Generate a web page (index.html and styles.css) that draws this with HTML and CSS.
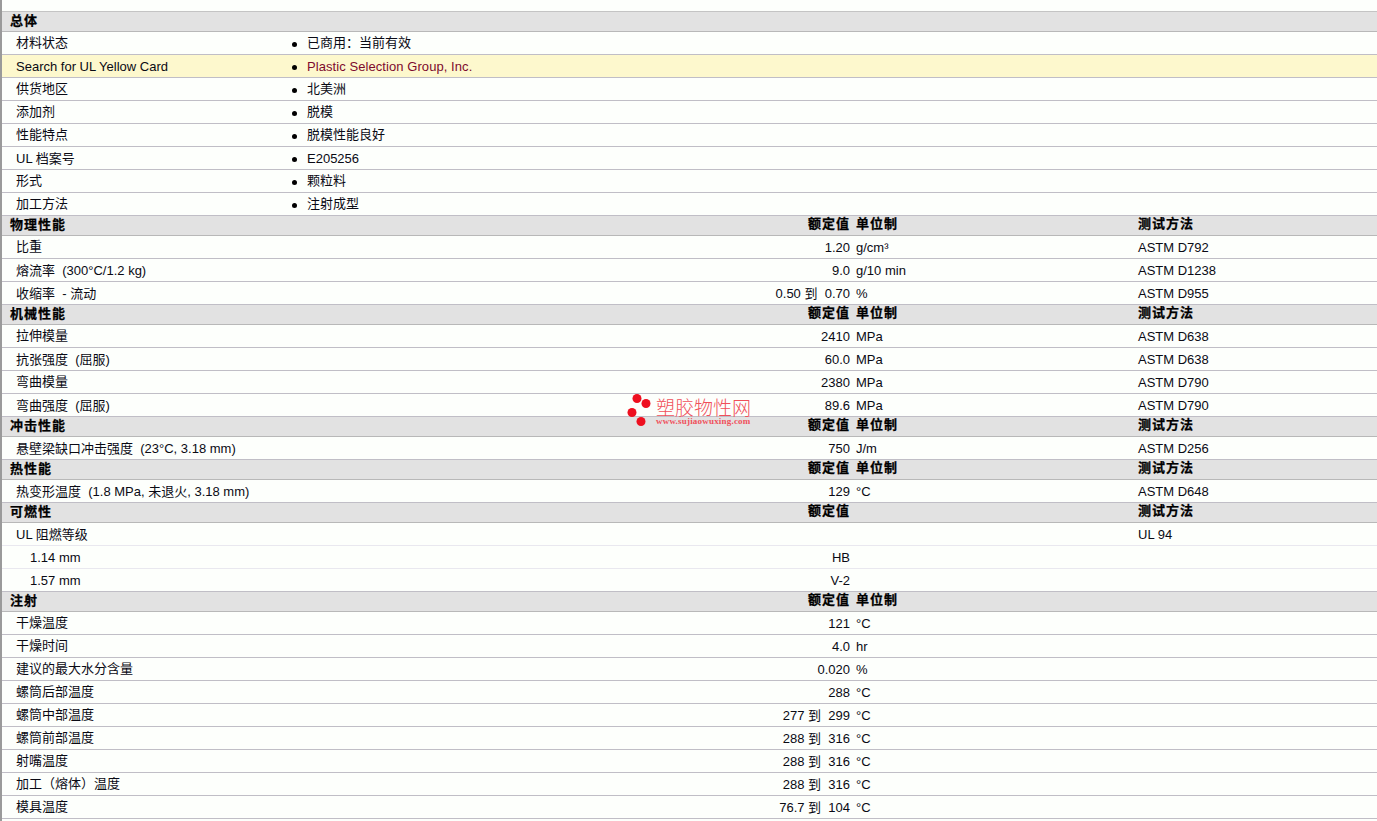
FILE: index.html
```html
<!DOCTYPE html>
<html lang="zh">
<head>
<meta charset="utf-8">
<title>塑胶物性</title>
<link rel="stylesheet" href="styles.css">
</head>
<body>
<main class="sheet">
  <div class="watermark">
    <svg class="wm-dots" width="28" height="36" viewBox="0 0 28 36"><circle cx="10" cy="5.5" r="4.5"/><circle cx="19" cy="10.5" r="4.5"/><circle cx="5" cy="19.5" r="4.5"/><circle cx="14" cy="28.5" r="4.5"/></svg>
    <div class="wm-text"><div class="wm-title">塑胶物性网</div><div class="wm-url">www.sujiaowuxing.com</div></div>
  </div>

  <div class="row head top"><span class="c-label">总体</span></div>
  <div class="row info"><span class="c-label zh">材料状态</span><span class="c-value zh">已商用：当前有效</span></div>
  <div class="row info hl"><span class="c-label">Search for UL Yellow Card</span><span class="c-value link">Plastic Selection Group, Inc.</span></div>
  <div class="row info"><span class="c-label zh">供货地区</span><span class="c-value zh">北美洲</span></div>
  <div class="row info"><span class="c-label zh">添加剂</span><span class="c-value zh">脱模</span></div>
  <div class="row info"><span class="c-label zh">性能特点</span><span class="c-value zh">脱模性能良好</span></div>
  <div class="row info"><span class="c-label">UL 档案号</span><span class="c-value">E205256</span></div>
  <div class="row info"><span class="c-label zh">形式</span><span class="c-value zh">颗粒料</span></div>
  <div class="row info"><span class="c-label zh">加工方法</span><span class="c-value zh">注射成型</span></div>

  <div class="row head data"><span class="c-label">物理性能</span><span class="c-num">额定值</span><span class="c-unit">单位制</span><span>测试方法</span></div>
  <div class="row data"><span class="c-label zh">比重</span><span class="c-num">1.20</span><span class="c-unit">g/cm³</span><span>ASTM D792</span></div>
  <div class="row data"><span class="c-label">熔流率&nbsp; (300°C/1.2 kg)</span><span class="c-num">9.0</span><span class="c-unit">g/10 min</span><span>ASTM D1238</span></div>
  <div class="row data"><span class="c-label">收缩率&nbsp; - 流动</span><span class="c-num">0.50 到&nbsp; 0.70</span><span class="c-unit">%</span><span>ASTM D955</span></div>

  <div class="row head data"><span class="c-label">机械性能</span><span class="c-num">额定值</span><span class="c-unit">单位制</span><span>测试方法</span></div>
  <div class="row data"><span class="c-label zh">拉伸模量</span><span class="c-num">2410</span><span class="c-unit">MPa</span><span>ASTM D638</span></div>
  <div class="row data"><span class="c-label">抗张强度&nbsp; (屈服)</span><span class="c-num">60.0</span><span class="c-unit">MPa</span><span>ASTM D638</span></div>
  <div class="row data"><span class="c-label zh">弯曲模量</span><span class="c-num">2380</span><span class="c-unit">MPa</span><span>ASTM D790</span></div>
  <div class="row data"><span class="c-label">弯曲强度&nbsp; (屈服)</span><span class="c-num">89.6</span><span class="c-unit">MPa</span><span>ASTM D790</span></div>

  <div class="row head data"><span class="c-label">冲击性能</span><span class="c-num">额定值</span><span class="c-unit">单位制</span><span>测试方法</span></div>
  <div class="row data"><span class="c-label">悬壁梁缺口冲击强度&nbsp; (23°C, 3.18 mm)</span><span class="c-num">750</span><span class="c-unit">J/m</span><span>ASTM D256</span></div>

  <div class="row head data"><span class="c-label">热性能</span><span class="c-num">额定值</span><span class="c-unit">单位制</span><span>测试方法</span></div>
  <div class="row data"><span class="c-label">热变形温度&nbsp; (1.8 MPa, 未退火, 3.18 mm)</span><span class="c-num">129</span><span class="c-unit">°C</span><span>ASTM D648</span></div>

  <div class="row head data"><span class="c-label">可燃性</span><span class="c-num">额定值</span><span class="c-unit"></span><span>测试方法</span></div>
  <div class="row data soft"><span class="c-label">UL 阻燃等级</span><span class="c-num"></span><span class="c-unit"></span><span>UL 94</span></div>
  <div class="row data soft"><span class="c-label sub">1.14 mm</span><span class="c-num">HB</span><span class="c-unit"></span><span></span></div>
  <div class="row data"><span class="c-label sub">1.57 mm</span><span class="c-num">V-2</span><span class="c-unit"></span><span></span></div>

  <div class="row head data"><span class="c-label">注射</span><span class="c-num">额定值</span><span class="c-unit">单位制</span><span></span></div>
  <div class="row data"><span class="c-label zh">干燥温度</span><span class="c-num">121</span><span class="c-unit">°C</span><span></span></div>
  <div class="row data"><span class="c-label zh">干燥时间</span><span class="c-num">4.0</span><span class="c-unit">hr</span><span></span></div>
  <div class="row data"><span class="c-label zh">建议的最大水分含量</span><span class="c-num">0.020</span><span class="c-unit">%</span><span></span></div>
  <div class="row data"><span class="c-label zh">螺筒后部温度</span><span class="c-num">288</span><span class="c-unit">°C</span><span></span></div>
  <div class="row data"><span class="c-label zh">螺筒中部温度</span><span class="c-num">277 到&nbsp; 299</span><span class="c-unit">°C</span><span></span></div>
  <div class="row data"><span class="c-label zh">螺筒前部温度</span><span class="c-num">288 到&nbsp; 316</span><span class="c-unit">°C</span><span></span></div>
  <div class="row data"><span class="c-label zh">射嘴温度</span><span class="c-num">288 到&nbsp; 316</span><span class="c-unit">°C</span><span></span></div>
  <div class="row data"><span class="c-label zh">加工（熔体）温度</span><span class="c-num">288 到&nbsp; 316</span><span class="c-unit">°C</span><span></span></div>
  <div class="row data"><span class="c-label zh">模具温度</span><span class="c-num">76.7 到&nbsp; 104</span><span class="c-unit">°C</span><span></span></div>
</main>
</body>
</html>
```
FILE: styles.css
```css
html, body {
  margin: 0;
  padding: 0;
  background: #fdfffc;
  height: 821px;
  overflow: hidden;
}
.sheet {
  position: relative;
  height: 810px;
  padding-top: 11px;
  border-left: 2px solid #9a9a9a;
  font: 13px/1 "Liberation Sans", "Noto Sans CJK SC", sans-serif;
  color: #0a0a14;
}
.row {
  display: flex;
  align-items: center;
  height: 22px;
  border-bottom: 1px solid #c0bec6;
  white-space: nowrap;
}
.row.data {
  display: grid;
  grid-template-columns: 500px 348px 288px 1fr;
  align-items: center;
}
.row.soft { border-bottom-color: #e9e8ef; }
.head {
  height: 19px;
  background: #e2e2e2;
  border-bottom: 1px solid #b8b8b8;
  font-weight: 700;
  letter-spacing: 1px;
  color: #000;
  -webkit-text-stroke: 0.25px #000;
}
.head > span { padding-bottom: 4px; }
.head > .c-label { padding-bottom: 2px; }
.head.top { border-top: 1px solid #c4c4c4; }
.zh { padding-bottom: 2px; }
.hl { background: #fdf8cd; }
.link { color: #7d0a2e; letter-spacing: 0.07px; }
.c-label { padding-left: 14px; }
.head .c-label { padding-left: 8px; }
.c-label.sub { padding-left: 28px; }
.info .c-label { width: 276px; flex: none; }
.c-value {
  display: flex;
  align-items: center;
  gap: 10px;
}
.c-value::before {
  content: "";
  width: 5px;
  height: 5px;
  margin-top: 2px;
  border-radius: 50%;
  background: #000;
}
.c-value.zh::before { margin-top: 4px; }
.c-num { text-align: right; }
.c-unit { padding-left: 6px; }
.watermark {
  position: absolute;
  left: 625px;
  top: 393px;
  display: flex;
  gap: 1px;
  color: #f0505a;
  pointer-events: none;
}
.wm-dots { fill: #ee0f1f; flex: none; }
.wm-text { padding-top: 3px; }
.wm-title {
  font: 300 19px/21px "Noto Sans CJK SC", sans-serif;
}
.wm-url {
  font: 700 9px/9px "Liberation Serif", serif;
  letter-spacing: 0.2px;
}
```
